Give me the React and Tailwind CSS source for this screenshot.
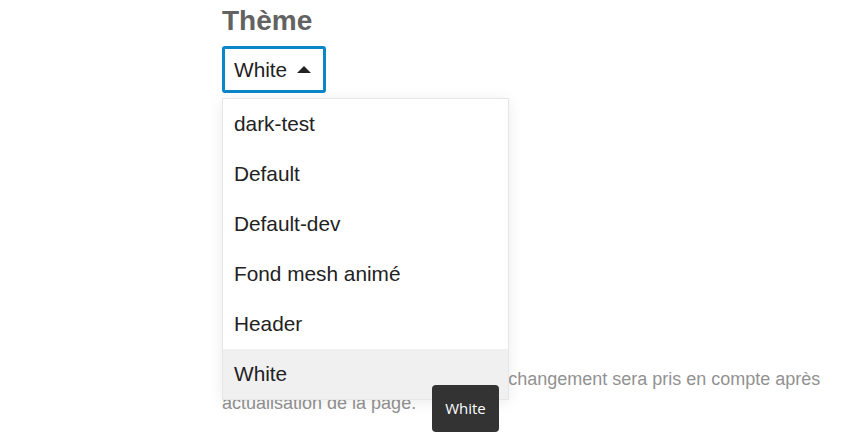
export default function App() {
  const items = ["dark-test", "Default", "Default-dev", "Fond mesh animé", "Header", "White"];
  return (
    <div className="w-[852px] h-[447px] bg-white overflow-hidden relative" style={{ fontFamily: '"Liberation Sans", Arial, sans-serif' }}>
      <div className="pl-[222px] pt-[4px]">
        <h1 className="text-[28px] leading-[34px] font-bold text-[#626262]">Thème</h1>
        <div className="relative mt-[8px] w-fit">
          <button className="h-[47px] flex items-center border-[3px] border-[#0a86c9] rounded-[3px] pl-[9px] pr-[12px] bg-white text-[20.8px] text-[#222]">
            <span>White</span>
            <svg width="14" height="7" viewBox="0 0 14 7" className="ml-[10px]">
              <path d="M0 7 L7 0 L14 7 Z" fill="#222" />
            </svg>
          </button>
          <div className="absolute left-0 top-[52px] w-[287px] bg-white border border-[#e6e6e6] shadow-[0_2px_14px_rgba(0,0,0,0.08)] z-10">
            {items.map((it) => (
              <div key={it} className={`h-[50px] flex items-center pl-[11px] text-[20.8px] text-[#222] ${it === "White" ? "bg-[#f0f0f0]" : ""}`}>
                {it}
              </div>
            ))}
          </div>
        </div>
        <p className="mt-[274px] text-[18px] leading-[24px] text-[#929292]">
          Le thème choisi sera enregistré. Le changement sera pris en compte après
          <br />
          actualisation de la page.
        </p>
      </div>
      <div className="absolute left-[432px] top-[385px] w-[67px] h-[47px] bg-[#333] rounded-[4px] flex items-center justify-center text-white text-[15px] z-20" style={{ fontFamily: '"Open Sans", "Noto Sans", sans-serif' }}>
        White
      </div>
    </div>
  );
}
